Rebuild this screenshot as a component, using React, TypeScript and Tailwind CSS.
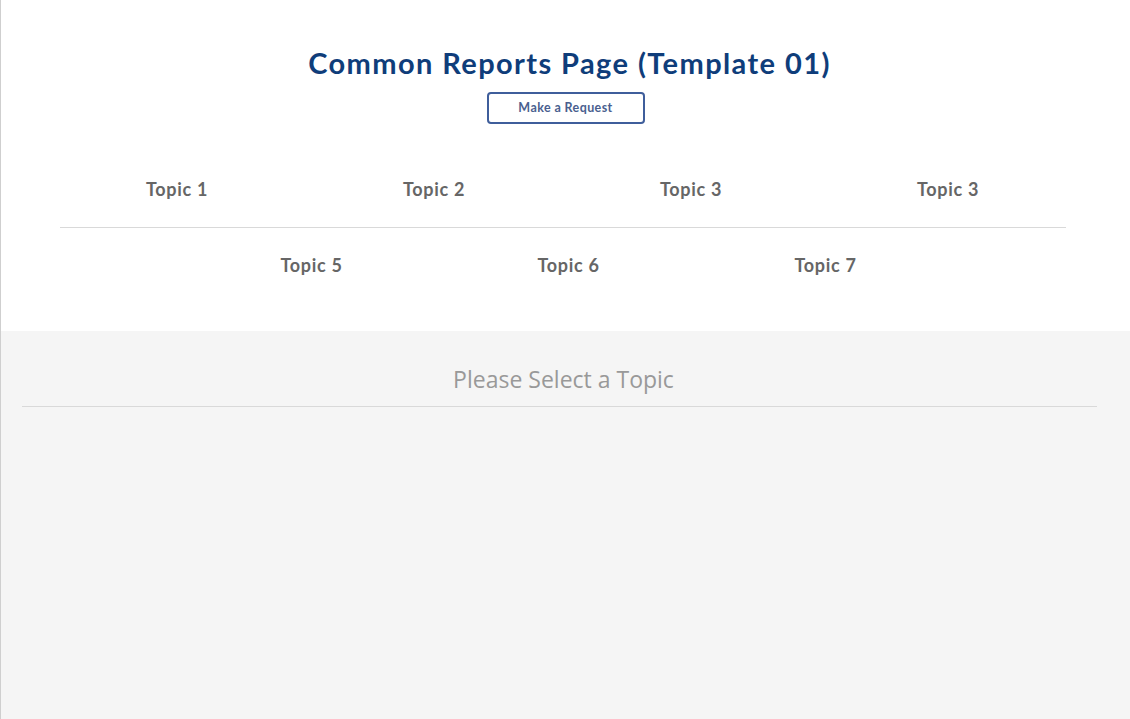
import React from 'react';

const rowOne = ['Topic 1', 'Topic 2', 'Topic 3', 'Topic 3'];
const rowTwo = ['Topic 5', 'Topic 6', 'Topic 7'];

function TopicRow({ topics, className }: { topics: string[]; className?: string }) {
  return (
    <div className={`flex justify-center ${className ?? ''}`}>
      {topics.map((topic, i) => (
        <button
          key={i}
          className="w-[257px] text-center text-[18px] font-bold tracking-[0.7px] text-[#666666] leading-none"
        >
          {topic}
        </button>
      ))}
    </div>
  );
}

export default function App() {
  return (
    <div className="min-h-screen w-full flex flex-col border-l border-[#cfcfcf] font-['Lato',sans-serif]">
      <div className="bg-white h-[331px] flex flex-col items-center">
        <h1 className="mt-[46px] text-[29px] leading-[34px] font-bold text-[#0f3d7a] tracking-[1.4px] pl-[8px]">
          Common Reports Page (Template 01)
        </h1>
        <button className="mt-[12px] w-[158px] h-[32px] border-2 border-[#3f5e9b] rounded-[4px] text-[12.5px] font-bold tracking-[0.4px] text-[#4a5f8f]">
          Make a Request
        </button>
        <TopicRow topics={rowOne} className="mt-[56px] w-full pr-[6px]" />
        <div className="mt-[29px] ml-[59px] w-[1006px] h-px bg-[#d9d9d9] self-start" />
        <TopicRow topics={rowTwo} className="mt-[28px] w-full pl-[6px]" />
      </div>
      <div className="flex-1 bg-[#f5f5f5] flex flex-col items-center">
        <h2 className="mt-[35px] text-[23px] leading-[26px] text-[#999999] font-['Open_Sans',sans-serif] pr-[4px]">
          Please Select a Topic
        </h2>
        <div className="mt-[14px] ml-[21px] w-[1075px] h-px bg-[#d9d9d9] self-start" />
      </div>
    </div>
  );
}
